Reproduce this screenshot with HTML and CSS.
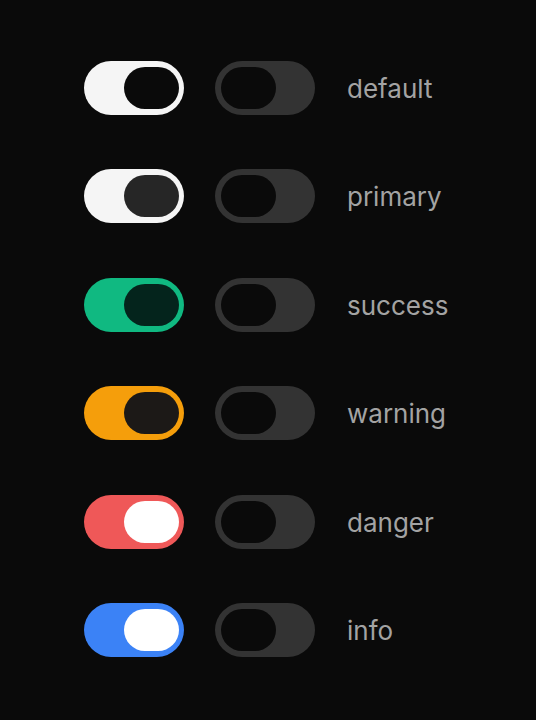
FILE: index.html
```html
<!DOCTYPE html>
<html lang="en">
<head>
    <meta charset="UTF-8">
    <meta name="viewport" content="width=device-width, initial-scale=1.0">
    <title>Switches</title>
    <link rel="stylesheet" href="styles.css">
</head>
<body>
    <main class="list">
        <div class="row">
            <span class="switch on default"><span class="knob"></span></span>
            <span class="switch off"><span class="knob"></span></span>
            <span class="label">default</span>
        </div>
        <div class="row">
            <span class="switch on primary"><span class="knob"></span></span>
            <span class="switch off"><span class="knob"></span></span>
            <span class="label">primary</span>
        </div>
        <div class="row">
            <span class="switch on success"><span class="knob"></span></span>
            <span class="switch off"><span class="knob"></span></span>
            <span class="label">success</span>
        </div>
        <div class="row">
            <span class="switch on warning"><span class="knob"></span></span>
            <span class="switch off"><span class="knob"></span></span>
            <span class="label">warning</span>
        </div>
        <div class="row">
            <span class="switch on danger"><span class="knob"></span></span>
            <span class="switch off"><span class="knob"></span></span>
            <span class="label">danger</span>
        </div>
        <div class="row">
            <span class="switch on info"><span class="knob"></span></span>
            <span class="switch off"><span class="knob"></span></span>
            <span class="label">info</span>
        </div>
    </main>
</body>
</html>
```

FILE: styles.css
```css
* {
    margin: 0;
    padding: 0;
    box-sizing: border-box;
}

body {
    background-color: #0a0a0a;
    font-family: Inter, "Noto Sans", sans-serif;
}

.list {
    display: flex;
    flex-direction: column;
    gap: 54.4px;
    padding: 61px 0 0 84px;
}

.row {
    display: flex;
    align-items: center;
    gap: 31px;
}

.switch {
    display: flex;
    align-items: center;
    width: 100px;
    height: 54px;
    border-radius: 27px;
    padding: 0 5px 0 6px;
}

.knob {
    width: 55px;
    height: 42px;
    border-radius: 21px;
}

.on {
    justify-content: flex-end;
}

.off {
    background-color: #333333;
    justify-content: flex-start;
}

.off .knob {
    background-color: #0a0a0a;
}

.default {
    background-color: #f5f5f5;
}

.default .knob {
    background-color: #0a0a0a;
}

.primary {
    background-color: #f5f5f5;
}

.primary .knob {
    background-color: #262626;
}

.success {
    background-color: #10b981;
}

.success .knob {
    background-color: #04241c;
}

.warning {
    background-color: #f59e0b;
}

.warning .knob {
    background-color: #1c1917;
}

.danger {
    background-color: #ef5858;
}

.danger .knob {
    background-color: #ffffff;
}

.info {
    background-color: #3b82f6;
}

.info .knob {
    background-color: #ffffff;
}

.label {
    margin-left: 1px;
    padding-top: 1px;
    color: #a3a3a3;
    font-size: 26px;
}
```
